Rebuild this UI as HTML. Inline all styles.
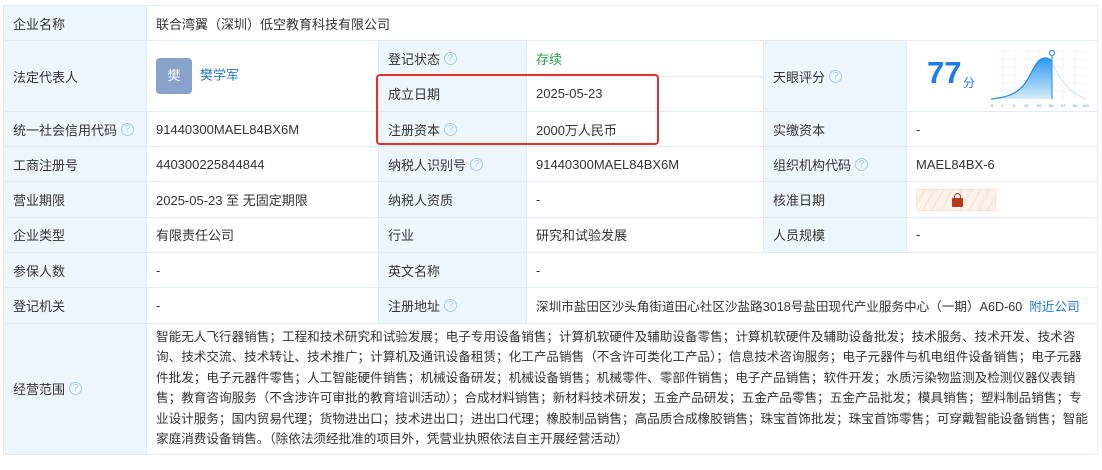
<!DOCTYPE html>
<html><head><meta charset="utf-8"><style>
*{margin:0;padding:0;box-sizing:border-box}
body{width:1102px;height:470px;background:#fff;font-family:"Liberation Sans","Noto Sans CJK SC",sans-serif;font-size:13px;color:#333;position:relative;overflow:hidden}
table{position:absolute;left:3px;top:5px;border-collapse:collapse;table-layout:fixed;width:1094px}
td{border:1px solid #e3ecf3;padding:0 0 0 9px;height:35.3px;vertical-align:middle;white-space:nowrap}
td.l{background:#eef6fd;color:#333}
.q{display:inline-block;width:13px;height:13px;border:1px solid #a9cde9;border-radius:50%;color:#a9cde9;font-size:10px;line-height:11px;text-align:center;vertical-align:middle;margin-left:4px;position:relative;top:-2px}
.g{color:#2e9a4e}
.b{color:#1f77d6}
.av{display:inline-block;width:36px;height:36px;border-radius:4px;background:#87a3cb;color:#fff;text-align:center;line-height:36px;font-size:13px;vertical-align:middle;margin-right:8px}
.scope{white-space:normal;line-height:20.5px;padding:3px 8px 4px 9px;font-size:12.6px;height:auto}
#red{position:absolute;left:376px;top:74px;width:283px;height:71px;border:2px solid #e5312b;border-radius:4px}
.lock{display:inline-block;width:80px;height:22px;border:1px solid #f7e3d6;border-radius:3px;background:repeating-linear-gradient(120deg,#fdf3ec 0 6px,#f9e6da 6px 8px);vertical-align:middle;position:relative}
.lock i{position:absolute;left:35px;top:8px;width:11px;height:9px;background:#b63a1e;border-radius:1px}
.lock i:before{content:"";position:absolute;left:2px;top:-5px;width:5px;height:6px;border:1.5px solid #b63a1e;border-bottom:none;border-radius:4px 4px 0 0}
</style></head><body>
<table>
<colgroup><col style="width:143px"><col style="width:232px"><col style="width:148px"><col style="width:237px"><col style="width:143px"><col style="width:191px"></colgroup>
<tr><td class="l">企业名称</td><td colspan="5">联合湾翼（深圳）低空教育科技有限公司</td></tr>
<tr><td class="l" rowspan="2">法定代表人</td><td rowspan="2"><span class="av">樊</span><span class="b">樊学军</span></td><td class="l">登记状态<span class="q">?</span></td><td class="g">存续</td><td class="l" rowspan="2">天眼评分<span class="q">?</span></td><td rowspan="2" style="position:relative;padding:0">
<span style="position:absolute;left:20px;top:14px;font-size:31px;font-weight:bold;color:#1a7cf0;font-family:'Liberation Sans',sans-serif">77</span><span style="position:absolute;left:56px;top:33px;font-size:12px;color:#1a7cf0">分</span>
<svg style="position:absolute;left:84px;top:6px" width="98" height="62" viewBox="0 0 98 62">
<g stroke="#edf2f7" stroke-width="0.8"><line x1="0" y1="4" x2="94" y2="4"/><line x1="0" y1="12" x2="94" y2="12"/><line x1="0" y1="20" x2="94" y2="20"/><line x1="0" y1="28" x2="94" y2="28"/><line x1="0" y1="36" x2="94" y2="36"/><line x1="0" y1="44" x2="94" y2="44"/><line x1="12" y1="4" x2="12" y2="52"/><line x1="24" y1="4" x2="24" y2="52"/><line x1="36" y1="4" x2="36" y2="52"/><line x1="48" y1="4" x2="48" y2="52"/><line x1="60" y1="4" x2="60" y2="52"/><line x1="72" y1="4" x2="72" y2="52"/><line x1="84" y1="4" x2="84" y2="52"/></g>
<defs><linearGradient id="gr" x1="0" y1="0" x2="0" y2="1"><stop offset="0" stop-color="#2a9af0"/><stop offset="1" stop-color="#d6ebfb"/></linearGradient></defs>
<path d="M0 52 C20 50 30 45 38 30 C44 18 48 11 54 11 C58 11 60 13 61 15 L61 52 Z" fill="url(#gr)"/>
<path d="M0 52 C20 50 30 45 38 30 C44 18 48 11 54 11 C58 11 60 13 61 15" fill="none" stroke="#1f86e0" stroke-width="1.2"/>
<path d="M61 15 C66 26 72 42 94 52" fill="none" stroke="#d4e4f1" stroke-width="1"/>
<line x1="61" y1="8" x2="61" y2="52" stroke="#3c9ae6" stroke-width="1.2"/>
<circle cx="61" cy="6" r="2.5" fill="#fff" stroke="#3c9ae6" stroke-width="1.3"/>
<g font-size="4" fill="#5b8cc0" font-family="Liberation Sans"><text x="0" y="60">0</text><text x="10" y="60">1</text><text x="22" y="60">3</text><text x="33" y="60">15</text><text x="46" y="60">50</text><text x="58" y="60">85</text><text x="70" y="60">97</text><text x="82" y="60">99</text><text x="91" y="60">100</text></g>
</svg></td></tr>
<tr><td class="l">成立日期</td><td>2025-05-23</td></tr>
<tr><td class="l">统一社会信用代码<span class="q">?</span></td><td>91440300MAEL84BX6M</td><td class="l">注册资本<span class="q">?</span></td><td>2000万人民币</td><td class="l">实缴资本</td><td>-</td></tr>
<tr><td class="l">工商注册号</td><td>440300225844844</td><td class="l">纳税人识别号<span class="q">?</span></td><td>91440300MAEL84BX6M</td><td class="l">组织机构代码<span class="q">?</span></td><td>MAEL84BX-6</td></tr>
<tr><td class="l">营业期限</td><td>2025-05-23 至 无固定期限</td><td class="l">纳税人资质</td><td>-</td><td class="l">核准日期</td><td><span class="lock"><i></i></span></td></tr>
<tr><td class="l">企业类型</td><td>有限责任公司</td><td class="l">行业</td><td>研究和试验发展</td><td class="l">人员规模</td><td>-</td></tr>
<tr><td class="l">参保人数</td><td>-</td><td class="l">英文名称</td><td colspan="3">-</td></tr>
<tr><td class="l">登记机关</td><td>-</td><td class="l">注册地址<span class="q">?</span></td><td colspan="3" style="font-size:12.6px">深圳市盐田区沙头角街道田心社区沙盐路3018号盐田现代产业服务中心（一期）A6D-60 &nbsp;<span class="b">附近公司</span></td></tr>
<tr><td class="l">经营范围<span class="q">?</span></td><td colspan="5" class="scope">智能无人飞行器销售；工程和技术研究和试验发展；电子专用设备销售；计算机软硬件及辅助设备零售；计算机软硬件及辅助设备批发；技术服务、技术开发、技术咨<br>询、技术交流、技术转让、技术推广；计算机及通讯设备租赁；化工产品销售（不含许可类化工产品）；信息技术咨询服务；电子元器件与机电组件设备销售；电子元器<br>件批发；电子元器件零售；人工智能硬件销售；机械设备研发；机械设备销售；机械零件、零部件销售；电子产品销售；软件开发；水质污染物监测及检测仪器仪表销<br>售；教育咨询服务（不含涉许可审批的教育培训活动）；合成材料销售；新材料技术研发；五金产品研发；五金产品零售；五金产品批发；模具销售；塑料制品销售；专<br>业设计服务；国内贸易代理；货物进出口；技术进出口；进出口代理；橡胶制品销售；高品质合成橡胶销售；珠宝首饰批发；珠宝首饰零售；可穿戴智能设备销售；智能<br>家庭消费设备销售。（除依法须经批准的项目外，凭营业执照依法自主开展经营活动）</td></tr>
</table>
<div id="red"></div>
</body></html>
